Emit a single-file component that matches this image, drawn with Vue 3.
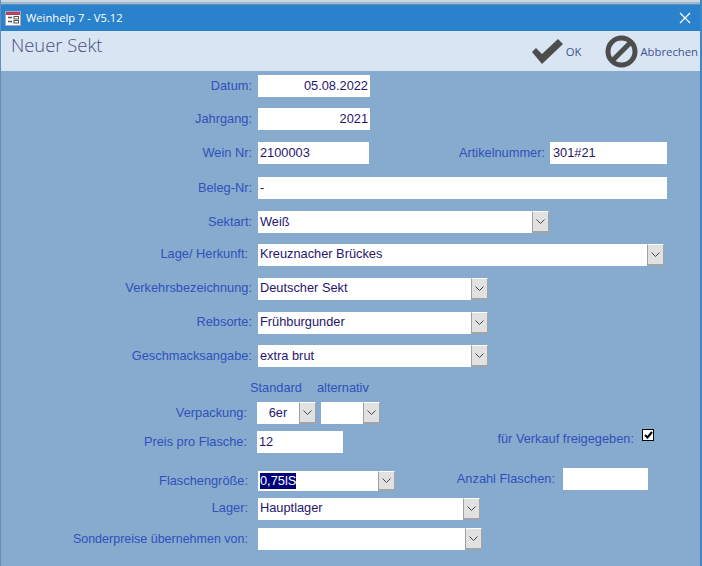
<script setup>
const rows = [
  { label: 'Datum:', value: '05.08.2022', width: 'w112', align: 'right' },
  { label: 'Jahrgang:', value: '2021', width: 'w112', align: 'right' },
  { label: 'Wein Nr:', value: '2100003', width: 'w111', extra: { label: 'Artikelnummer:', value: '301#21', kind: 'article' } },
  { label: 'Beleg-Nr:', value: '-', width: 'w409' },
  { label: 'Sektart:', value: 'Weiß', width: 'w274', combo: true },
  { label: 'Lage/ Herkunft:', value: 'Kreuznacher Brückes', width: 'w389', combo: true, inset: true, tight: true },
  { label: 'Verkehrsbezeichnung:', value: 'Deutscher Sekt', width: 'w213', combo: true, tight: true },
  { label: 'Rebsorte:', value: 'Frühburgunder', width: 'w213', combo: true, tight: true },
  { label: 'Geschmacksangabe:', value: 'extra brut', width: 'w213', combo: true }
]
</script>

<template>
  <div class="window">
    <div class="strip"></div>
    <div class="titlebar">
      <svg class="appicon" width="16" height="15" viewBox="0 0 16 15">
        <rect x="0.5" y="0.5" width="15" height="14" fill="#fff" stroke="#a8a8b8" />
        <rect x="1" y="1" width="14" height="3" fill="#b5405f" />
        <path d="M3 6.5h4M3 10.5h4" stroke="#555" stroke-width="1.4" />
        <rect x="9" y="5.5" width="4.5" height="2.5" fill="none" stroke="#555" />
        <rect x="9" y="9.5" width="4.5" height="2.5" fill="none" stroke="#555" />
      </svg>
      <span class="apptitle">Weinhelp 7 - V5.12</span>
      <svg class="close" width="12" height="12" viewBox="0 0 12 12">
        <path d="M1 1l10 10M11 1L1 11" stroke="#fff" stroke-width="1.2" fill="none" />
      </svg>
    </div>
    <header class="head">
      <h1>Neuer Sekt</h1>
      <div class="actions">
        <button class="action ok">
          <svg width="34" height="26" viewBox="0 0 34 26">
            <path d="M1 14l4-4 6 6L27 1l5 5-21 20z" fill="#4d4d4d" />
          </svg>
          <span>OK</span>
        </button>
        <button class="action cancel">
          <svg width="33" height="33" viewBox="0 0 33 33">
            <circle cx="16.5" cy="16.5" r="13.5" fill="none" stroke="#4d4d4d" stroke-width="5" />
            <path d="M8 25L25 8" stroke="#4d4d4d" stroke-width="5" />
          </svg>
          <span>Abbrechen</span>
        </button>
      </div>
    </header>

    <form class="form" @submit.prevent>
      <div v-for="r in rows" :key="r.label" class="row" :class="{ tight: r.tight }">
        <label class="label" :class="{ inset: r.inset }">{{ r.label }}</label>
        <div class="field" :class="[r.width, r.align === 'right' ? 'right' : '']">{{ r.value }}</div>
        <span v-if="r.combo" class="drop"><svg width="9" height="5" viewBox="0 0 9 5"><path d="M.5.5l4 4 4-4" fill="none" stroke="#444" /></svg></span>
        <template v-if="r.extra">
          <label class="label2">{{ r.extra.label }}</label>
          <div class="field w117 pad3">{{ r.extra.value }}</div>
        </template>
      </div>

      <div class="row captions">
        <span class="cap1">Standard</span>
        <span class="cap2">alternativ</span>
      </div>

      <div class="row shift">
        <label class="label inset">Verpackung:</label>
        <div class="field w42 pack">6er</div>
        <span class="drop"><svg width="9" height="5" viewBox="0 0 9 5"><path d="M.5.5l4 4 4-4" fill="none" stroke="#444" /></svg></span>
        <div class="field w42 second"></div>
        <span class="drop"><svg width="9" height="5" viewBox="0 0 9 5"><path d="M.5.5l4 4 4-4" fill="none" stroke="#444" /></svg></span>
      </div>

      <div class="row shift">
        <label class="label inset">Preis pro Flasche:</label>
        <div class="field w86">12</div>
        <label class="label3">für Verkauf freigegeben:</label>
        <span class="check">
          <svg width="9" height="8" viewBox="0 0 9 8"><path d="M1 4l2.5 2.5L8 1" fill="none" stroke="#000" stroke-width="2" /></svg>
        </span>
      </div>

      <div class="row tight">
        <label class="label inset">Flaschengröße:</label>
        <div class="field w120 short"><span class="selected">0,75lS</span></div>
        <span class="drop short"><svg width="9" height="5" viewBox="0 0 9 5"><path d="M.5.5l4 4 4-4" fill="none" stroke="#444" /></svg></span>
        <label class="label4">Anzahl Flaschen:</label>
        <div class="field w85 raised"></div>
      </div>

      <div class="row tight">
        <label class="label inset">Lager:</label>
        <div class="field w205">Hauptlager</div>
        <span class="drop"><svg width="9" height="5" viewBox="0 0 9 5"><path d="M.5.5l4 4 4-4" fill="none" stroke="#444" /></svg></span>
      </div>

      <div class="row">
        <label class="label inset narrow">Sonderpreise übernehmen von:</label>
        <div class="field w207"></div>
        <span class="drop"><svg width="9" height="5" viewBox="0 0 9 5"><path d="M.5.5l4 4 4-4" fill="none" stroke="#444" /></svg></span>
      </div>
    </form>
  </div>
</template>

<style scoped>
.window {
  width: 702px;
  height: 566px;
  display: flex;
  flex-direction: column;
  overflow: hidden;
  box-sizing: border-box;
  background: #86abce;
  border-left: 1px solid #5f8fbd;
  border-right: 2px solid #3a87cc;
  font-family: "Liberation Sans", Arial, sans-serif;
}
.strip {
  height: 5px;
  margin-left: -1px;
  margin-right: -2px;
  background: linear-gradient(#c9d7e2 0 2px, #9fb8cc 2px 4px, #5f8fbd 4px);
}
.titlebar {
  height: 26px;
  background: #2a82cd;
  display: flex;
  align-items: center;
  padding-left: 4px;
  padding-right: 9px;
}
.appicon { flex: none; }
.apptitle {
  margin-left: 5px;
  margin-top: -1px;
  color: #fff;
  font: 11.2px "Open Sans", sans-serif;
}
.close { margin-left: auto; }
.head {
  height: 40px;
  background: #dae5f3;
  display: flex;
  justify-content: space-between;
}
.head h1 {
  margin: 1px 0 0 10px;
  font: 300 18.4px "Open Sans", sans-serif;
  color: #4a4f7f;
}
.actions {
  display: flex;
  align-items: center;
}
.action {
  display: flex;
  align-items: center;
  border: 0;
  padding: 0;
  background: none;
  color: #3f5393;
  font: 11.3px "Open Sans", sans-serif;
}
.ok { margin-right: 24px; }
.ok svg { margin-right: 1px; }
.cancel { margin-right: 2px; }
.cancel svg { margin-right: 2px; }
.form {
  display: grid;
  grid-template-rows: 33px 34px 35px 34px 33px 34px 34px 33px 35px 22px 29px 40px 27px 30px 22px;
  padding-top: 4px;
  margin: 0;
}
.row {
  display: flex;
  align-items: flex-start;
  height: 22px;
  font-size: 12.8px;
  line-height: 22px;
  color: #3150bb;
}
.tight { line-height: 20px; }
.shift { margin-left: -1px; }
.label {
  width: 251px;
  box-sizing: border-box;
  text-align: right;
  margin-right: 6px;
  flex: none;
  white-space: nowrap;
}
.inset {
  width: 247px;
  margin-right: 10px;
}
.narrow { font-size: 12.5px; }
.field {
  height: 22px;
  background: #fff;
  color: #27156e;
  box-sizing: border-box;
  padding: 0 2px;
  flex: none;
  white-space: nowrap;
}
.pad3 { padding-left: 3px; }
.right { text-align: right; }
.w42 { width: 42px; }
.w85 { width: 85px; }
.w86 { width: 86px; }
.w111 { width: 111px; }
.w112 { width: 112px; }
.w117 { width: 117px; }
.w120 { width: 120px; }
.w205 { width: 205px; }
.w207 { width: 207px; }
.w213 { width: 213px; }
.w274 { width: 274px; }
.w389 { width: 389px; }
.w409 { width: 409px; }
.drop {
  width: 17px;
  height: 22px;
  box-sizing: border-box;
  flex: none;
  background: #e1e1e1;
  border-top: 1px solid #fff;
  border-left: 1px solid #a0a0a0;
  border-bottom: 2px solid #a0a4a8;
  border-right: 1px solid #a0a4a8;
  display: flex;
  align-items: center;
  justify-content: center;
}
.label2 {
  width: 176px;
  margin-right: 5px;
  text-align: right;
  flex: none;
}
.captions { height: 16px; line-height: 16px; margin-top: 0; }
.cap1 { margin-left: 249px; }
.cap2 { margin-left: 15px; }
.pack { text-align: center; }
.second { margin-left: 5px; }
.label3 {
  width: 291px;
  text-align: right;
  flex: none;
  line-height: 15px;
  margin-top: 0;
}
.check {
  width: 12px;
  height: 12px;
  margin-left: 8px;
  margin-top: -2px;
  box-sizing: border-box;
  background: #fff;
  border: 1px solid #000;
  display: flex;
  align-items: center;
  justify-content: center;
  flex: none;
}
.short { height: 20px; line-height: 20px; }
.selected { background: #00007a; color: #fff; display: inline-block; line-height: 16px; }
.label4 {
  width: 160px;
  text-align: right;
  margin-right: 8px;
  margin-top: -3px;
  flex: none;
  line-height: 22px;
}
.raised { margin-top: -3px; }
</style>

<style>
html, body { margin: 0; background: #86abce; }
</style>
